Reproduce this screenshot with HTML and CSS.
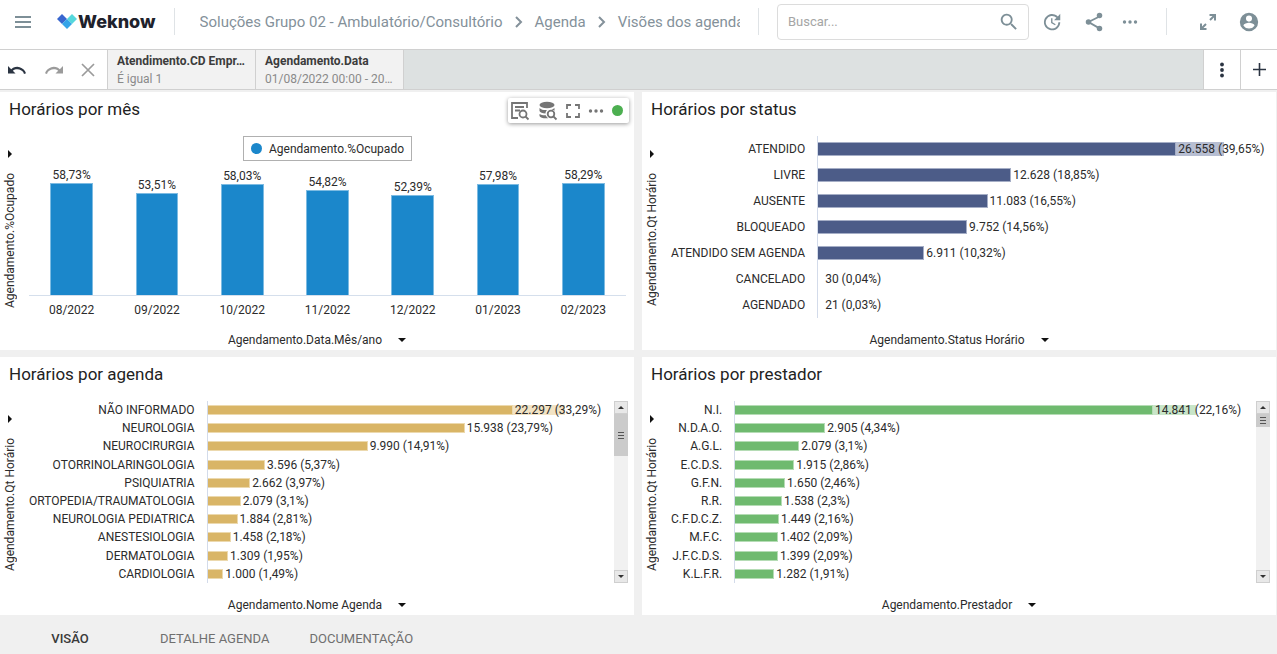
FILE: index.html
```html
<!DOCTYPE html>
<html lang="pt-BR">
<head>
<meta charset="utf-8">
<meta name="viewport" content="width=device-width, initial-scale=1">
<title>Weknow - Visões dos agendamentos</title>
<link rel="stylesheet" href="styles.css">
</head>
<body>
<header class="topbar">
  <button class="icon-btn menu" aria-label="Menu"><svg width="18" height="14" viewBox="0 0 18 14"><path d="M1 2h16M1 7h16M1 12h16" stroke="currentColor" stroke-width="1.800"/></svg></button>
  <a class="logo" href="#">
    <svg width="20" height="16" viewBox="0 0 20 16"><path d="M5 0l5 5-5 5-5-5z" fill="#3866cf"/><path d="M15 0l5 5-5 5-5-5z" fill="#56d8dc"/><path d="M10 5l5 5-5 5-5-5z" fill="#35a4e8"/></svg>
    <span>Weknow</span>
  </a>
  <span class="divider"></span>
  <nav class="crumbs" aria-label="Navegação">
    <a href="#">Soluções Grupo 02 - Ambulatório/Consultório</a>
    <svg width="8" height="12" viewBox="0 0 8 12"><path d="M1 1l5 5-5 5" fill="none" stroke="currentColor" stroke-width="2"/></svg>
    <a href="#">Agenda</a>
    <svg width="8" height="12" viewBox="0 0 8 12"><path d="M1 1l5 5-5 5" fill="none" stroke="currentColor" stroke-width="2"/></svg>
    <a href="#">Visões dos agendamentos</a>
  </nav>
  <span class="divider"></span>
  <form class="search" role="search">
    <input type="text" placeholder="Buscar..." aria-label="Buscar">
    <button class="icon-btn" type="button" aria-label="Pesquisar"><svg width="22" height="22" viewBox="0 0 24 24" fill="currentColor"><path d="M15.5 14h-.8l-.3-.3A6.5 6.5 0 1 0 13.7 14.4l.3.3v.8l5 5 1.500-1.500zm-6 0a4.500 4.500 0 1 1 0-9 4.500 4.500 0 0 1 0 9z"/></svg></button>
  </form>
  <div class="actions">
    <button class="icon-btn" aria-label="Atualizar"><svg width="22" height="22" viewBox="0 0 24 24" fill="currentColor"><path d="M21 10.100h-6.800l2.700-2.800a6.900 6.900 0 1 0 2.100 4.900h2a8.900 8.900 0 1 1-2.600-6.300L21 3zM12.500 8v4.300l3.500 2.100-.7 1.200L11 13V8z"/></svg></button>
    <button class="icon-btn" aria-label="Compartilhar"><svg width="22" height="22" viewBox="0 0 24 24" fill="currentColor"><path d="M18 6L6 12l12 7" fill="none" stroke="currentColor" stroke-width="2"/><circle cx="18" cy="5" r="3"/><circle cx="6" cy="12" r="3"/><circle cx="18" cy="19" r="3"/></svg></button>
    <button class="icon-btn dots" aria-label="Mais opções"><svg width="16" height="4" viewBox="0 0 16 4" fill="currentColor"><circle cx="2.500" cy="2" r="1.700"/><circle cx="8" cy="2" r="1.700"/><circle cx="13.500" cy="2" r="1.700"/></svg></button>
  </div>
  <span class="divider"></span>
  <div class="user">
    <button class="icon-btn" aria-label="Tela cheia"><svg width="18" height="18" viewBox="0 0 18 18" fill="none" stroke="currentColor" stroke-width="2"><path d="M10.500 2H16v5.500M16 2l-5 5M7.500 16H2v-5.500M2 16l5-5"/></svg></button>
    <button class="icon-btn" aria-label="Usuário"><svg width="22" height="22" viewBox="0 0 24 24" fill="currentColor"><path d="M12 2a10 10 0 1 0 0 20 10 10 0 0 0 0-20zm0 3a3.300 3.300 0 1 1 0 6.600A3.300 3.300 0 0 1 12 5zm0 14.200a7.200 7.200 0 0 1-6-3.200c0-2 4-3.100 6-3.100s6 1.100 6 3.100a7.200 7.200 0 0 1-6 3.200z"/></svg></button>
  </div>
</header>

<div class="filterbar">
  <div class="history">
    <button class="icon-btn undo" aria-label="Desfazer"><svg width="20" height="10" viewBox="0 0 20 10"><path d="M1 1v7.500h7.500L5.800 5.800A7 7 0 0 1 17 9l2-.7A9.100 9.100 0 0 0 4.200 4.200z" fill="currentColor"/></svg></button>
    <button class="icon-btn muted" aria-label="Refazer"><svg width="20" height="10" viewBox="0 0 20 10"><path d="M19 1v7.500h-7.500l2.700-2.700A7 7 0 0 0 3 9l-2-.7A9.100 9.100 0 0 1 15.800 4.200z" fill="currentColor"/></svg></button>
    <button class="icon-btn muted" aria-label="Limpar"><svg width="14" height="14" viewBox="0 0 14 14"><path d="M1 1l12 12M13 1L1 13" stroke="currentColor" stroke-width="1.700"/></svg></button>
  </div>
  <button class="chip"><strong>Atendimento.CD Empr…</strong><span>É igual 1</span></button>
  <button class="chip"><strong>Agendamento.Data</strong><span>01/08/2022 00:00 - 20…</span></button>
  <div class="spacer"></div>
  <button class="square" aria-label="Opções de filtro"><svg width="6" height="16" viewBox="0 0 6 16" fill="currentColor"><circle cx="3" cy="2.500" r="1.900"/><circle cx="3" cy="8" r="1.900"/><circle cx="3" cy="13.500" r="1.900"/></svg></button>
  <button class="square" aria-label="Adicionar filtro"><svg width="13" height="13" viewBox="0 0 13 13"><path d="M6.500 0v13M0 6.500h13" stroke="currentColor" stroke-width="1.600"/></svg></button>
</div>

<main class="board">
  <section class="panel">
    <h2>Horários por mês</h2>
    <div class="tools">
      <button class="icon-btn" aria-label="Ver dados"><svg width="20" height="20" viewBox="0 0 20 20" fill="none" stroke="currentColor" stroke-width="1.800"><path d="M8 17H2V2h15v5M5 6h9M5 9.500h5"/><circle cx="13" cy="13" r="3.500"/><path d="M15.500 15.500l3 3"/></svg></button>
      <button class="icon-btn" aria-label="Consultar base"><svg width="20" height="20" viewBox="0 0 20 20"><ellipse cx="9" cy="4" rx="7.500" ry="3.200" fill="currentColor"/><path d="M1.500 7c2 2 5 2.300 7.500 2-1 1-1.500 2.200-1.500 3.500-3-.1-5.500-1-6-2.500zM1.500 13c1.500 1 4 1.500 6.300 1.300.5 1.200 1.300 2.200 2.400 2.900-4 .6-8-.5-8.700-2.200zM16.500 7c-1 .8-2 1.200-3 1.400 1.300.2 2.300.7 3 1.400z" fill="currentColor"/><g fill="none" stroke="currentColor" stroke-width="1.800"><circle cx="13" cy="13" r="3.300"/><path d="M15.500 15.500l3 3"/></g></svg></button>
      <button class="icon-btn" aria-label="Expandir"><svg width="14" height="14" viewBox="0 0 14 14" fill="none" stroke="currentColor" stroke-width="1.800"><path d="M1 5V1h4M9 1h4v4M13 9v4H9M5 13H1V9"/></svg></button>
      <button class="icon-btn" aria-label="Mais"><svg width="16" height="4" viewBox="0 0 16 4" fill="currentColor"><circle cx="2.500" cy="2" r="1.700"/><circle cx="8" cy="2" r="1.700"/><circle cx="13.500" cy="2" r="1.700"/></svg></button>
      <span class="online"></span>
    </div>
    <div class="body">
      <button class="yaxis"><span>Agendamento.%Ocupado</span></button>
      <div class="colchart">
        <div class="legend"><i></i>Agendamento.%Ocupado</div>
        <div class="cols">
          <div class="col"><span>58,73%</span><i style="height:83.900%"></i></div>
          <div class="col"><span>53,51%</span><i style="height:76.400%"></i></div>
          <div class="col"><span>58,03%</span><i style="height:82.900%"></i></div>
          <div class="col"><span>54,82%</span><i style="height:78.300%"></i></div>
          <div class="col"><span>52,39%</span><i style="height:74.800%"></i></div>
          <div class="col"><span>57,98%</span><i style="height:82.800%"></i></div>
          <div class="col"><span>58,29%</span><i style="height:83.300%"></i></div>
        </div>
        <div class="months"><span>08/2022</span><span>09/2022</span><span>10/2022</span><span>11/2022</span><span>12/2022</span><span>01/2023</span><span>02/2023</span></div>
      </div>
    </div>
    <button class="xaxis">Agendamento.Data.Mês/ano</button>
  </section>

  <section class="panel">
    <h2>Horários por status</h2>
    <div class="body">
      <button class="yaxis"><span>Agendamento.Qt Horário</span></button>
      <dl class="bars navy">
        <dt>ATENDIDO</dt><dd class="top"><i style="width:80.3%"></i><span>26.558 (39,65%)</span></dd>
        <dt>LIVRE</dt><dd><i style="width:43.3%"></i><span>12.628 (18,85%)</span></dd>
        <dt>AUSENTE</dt><dd><i style="width:38%"></i><span>11.083 (16,55%)</span></dd>
        <dt>BLOQUEADO</dt><dd><i style="width:33.4%"></i><span>9.752 (14,56%)</span></dd>
        <dt>ATENDIDO SEM AGENDA</dt><dd><i style="width:23.8%"></i><span>6.911 (10,32%)</span></dd>
        <dt>CANCELADO</dt><dd class="none"><span>30 (0,04%)</span></dd>
        <dt>AGENDADO</dt><dd class="none"><span>21 (0,03%)</span></dd>
      </dl>
    </div>
    <button class="xaxis">Agendamento.Status Horário</button>
  </section>

  <section class="panel">
    <h2>Horários por agenda</h2>
    <div class="body">
      <button class="yaxis"><span>Agendamento.Qt Horário</span></button>
      <dl class="bars gold">
        <dt>NÃO INFORMADO</dt><dd class="top"><i style="width:77.4%"></i><span>22.297 (33,29%)</span></dd>
        <dt>NEUROLOGIA</dt><dd><i style="width:65.2%"></i><span>15.938 (23,79%)</span></dd>
        <dt>NEUROCIRURGIA</dt><dd><i style="width:40.6%"></i><span>9.990 (14,91%)</span></dd>
        <dt>OTORRINOLARINGOLOGIA</dt><dd><i style="width:14.6%"></i><span>3.596 (5,37%)</span></dd>
        <dt>PSIQUIATRIA</dt><dd><i style="width:10.8%"></i><span>2.662 (3,97%)</span></dd>
        <dt>ORTOPEDIA/TRAUMATOLOGIA</dt><dd><i style="width:8.4%"></i><span>2.079 (3,1%)</span></dd>
        <dt>NEUROLOGIA PEDIATRICA</dt><dd><i style="width:7.6%"></i><span>1.884 (2,81%)</span></dd>
        <dt>ANESTESIOLOGIA</dt><dd><i style="width:5.9%"></i><span>1.458 (2,18%)</span></dd>
        <dt>DERMATOLOGIA</dt><dd><i style="width:5.2%"></i><span>1.309 (1,95%)</span></dd>
        <dt>CARDIOLOGIA</dt><dd><i style="width:4%"></i><span>1.000 (1,49%)</span></dd>
      </dl>
      <div class="scroll"><button class="up" aria-label="Subir"></button><div class="thumb"></div><button class="down" aria-label="Descer"></button></div>
    </div>
    <button class="xaxis">Agendamento.Nome Agenda</button>
  </section>

  <section class="panel">
    <h2>Horários por prestador</h2>
    <div class="body">
      <button class="yaxis"><span>Agendamento.Qt Horário</span></button>
      <dl class="bars green">
        <dt>N.I.</dt><dd class="top"><i style="width:82.1%"></i><span>14.841 (22,16%)</span></dd>
        <dt>N.D.A.O.</dt><dd><i style="width:17.7%"></i><span>2.905 (4,34%)</span></dd>
        <dt>A.G.L.</dt><dd><i style="width:12.6%"></i><span>2.079 (3,1%)</span></dd>
        <dt>E.C.D.S.</dt><dd><i style="width:11.6%"></i><span>1.915 (2,86%)</span></dd>
        <dt>G.F.N.</dt><dd><i style="width:9.8%"></i><span>1.650 (2,46%)</span></dd>
        <dt>R.R.</dt><dd><i style="width:9.2%"></i><span>1.538 (2,3%)</span></dd>
        <dt>C.F.D.C.Z.</dt><dd><i style="width:8.6%"></i><span>1.449 (2,16%)</span></dd>
        <dt>M.F.C.</dt><dd><i style="width:8.4%"></i><span>1.402 (2,09%)</span></dd>
        <dt>J.F.C.D.S.</dt><dd><i style="width:8.4%"></i><span>1.399 (2,09%)</span></dd>
        <dt>K.L.F.R.</dt><dd><i style="width:7.7%"></i><span>1.282 (1,91%)</span></dd>
      </dl>
      <div class="scroll short"><button class="up" aria-label="Subir"></button><div class="thumb"></div><button class="down" aria-label="Descer"></button></div>
    </div>
    <button class="xaxis">Agendamento.Prestador</button>
  </section>
</main>

<nav class="tabs" aria-label="Visões">
  <a class="active" href="#">VISÃO</a>
  <a href="#">DETALHE AGENDA</a>
  <a href="#">DOCUMENTAÇÃO</a>
</nav>
</body>
</html>
```

FILE: styles.css
```css
* { box-sizing: border-box; }

body {
  margin: 0;
  min-height: 100vh;
  display: flex;
  flex-direction: column;
  background: #f0f0f0;
  color: #2b2b2b;
  font: 12px/16px Roboto, "Liberation Sans", sans-serif;
}

a { color: inherit; text-decoration: none; }

button {
  border: 0;
  padding: 0;
  background: none;
  color: inherit;
  font: inherit;
  cursor: pointer;
}

svg { display: block; flex: none; }

.icon-btn { display: flex; align-items: center; justify-content: center; flex: none; }

/* Top bar */
.topbar {
  display: flex;
  align-items: center;
  height: 50px;
  padding: 0 17px 6px 14px;
  border-bottom: 1px solid #d0d0d0;
  background: #fff;
  color: #7d8f97;
}

.menu { margin-right: 25px; }

.logo {
  display: flex;
  align-items: center;
  gap: 1px;
  color: #1e222c;
  font: 800 18px/24px Inter, Roboto, sans-serif;
}

.divider { flex: none; width: 1px; height: 27px; margin: 0 18px; background: #dfe3e6; }
.logo + .divider { margin-right: 25px; }

.crumbs {
  flex: 1;
  min-width: 0;
  display: flex;
  align-items: center;
  gap: 12px;
  overflow: hidden;
  color: #84919a;
  font-size: 15px;
  line-height: 20px;
  white-space: nowrap;
}

.crumbs a { flex: none; }

.search {
  flex: none;
  display: flex;
  align-items: center;
  width: 252px;
  height: 36px;
  padding: 0 8px 0 10px;
  border: 1px solid #dcdcdc;
  border-radius: 4px;
}

.search input {
  flex: 1;
  min-width: 0;
  border: 0;
  padding: 0;
  outline: 0;
  background: none;
  color: #555;
  font: 13px/20px Roboto, sans-serif;
}

.search input::placeholder { color: #a5a5a5; }

.actions { display: flex; align-items: center; gap: 20px; padding-left: 12px; }
.dots { margin-right: 10px; margin-left: -3px; }
.user { display: flex; align-items: center; gap: 21px; padding-left: 14px; }

/* Filter bar */
.filterbar {
  display: flex;
  height: 40px;
  border-bottom: 1px solid #d0d0d0;
  background: #fff;
  color: #2b3442;
}

.history { display: flex; align-items: center; gap: 17px; padding: 0 12px 0 7px; }
.muted { color: #9b9b9b; }

.chip {
  width: 148px;
  padding: 0 9px;
  border-left: 1px solid #d0d0d0;
  background: #f2f2f2;
  overflow: hidden;
  color: #8a8a8a;
  line-height: 18px;
  text-align: left;
  white-space: nowrap;
}

.chip strong, .chip span { display: block; }
.chip strong { color: #3c3c3c; font-weight: 700; }

.spacer { flex: 1; border-left: 1px solid #d0d0d0; background: #dde1e1; }

.square {
  display: flex;
  align-items: center;
  justify-content: center;
  width: 37px;
  border-left: 1px solid #d0d0d0;
}

/* Dashboard */
.board {
  flex: 1;
  display: grid;
  grid-template-columns: 1fr 1fr;
  grid-auto-rows: 1fr;
  gap: 7px 8px;
  padding: 2px 1px 0 0;
}

.panel {
  position: relative;
  display: flex;
  flex-direction: column;
  min-width: 0;
  background: #fff;
}

.panel h2 {
  margin: 0;
  padding: 5px 9px 15px;
  color: #222;
  font-size: 17px;
  font-weight: 400;
  line-height: 24px;
}

.tools {
  position: absolute;
  top: 6px;
  right: 5px;
  display: flex;
  align-items: center;
  gap: 8px;
  height: 25px;
  padding: 0 6px 0 2px;
  border-radius: 2px;
  background: #fff;
  box-shadow: 0 1px 4px #00000066;
  color: #757575;
}

.online { width: 11px; height: 11px; border-radius: 50%; background: #4caf50; }

.body { flex: 1; display: flex; min-height: 0; padding-bottom: 12px; }

.yaxis {
  flex: none;
  display: flex;
  flex-direction: column;
  align-items: center;
  gap: 15px;
  width: 29px;
  padding: 14px 10px 0 0;
}

.yaxis::before {
  content: "";
  border: 4px solid transparent;
  border-left: 4px solid #111;
  border-right: 0;
}

.yaxis span { writing-mode: vertical-rl; transform: rotate(180deg); white-space: nowrap; }

.xaxis {
  display: flex;
  align-items: center;
  justify-content: center;
  gap: 16px;
  height: 20px;
}

.xaxis::after {
  content: "";
  border: 4px solid transparent;
  border-top-color: #111;
  border-bottom: 0;
}

/* Column chart */
.colchart { flex: 1; display: flex; flex-direction: column; padding-right: 8px; }

.legend {
  align-self: center;
  display: flex;
  align-items: center;
  gap: 7px;
  height: 25px;
  padding: 0 7px;
  border: 1px solid #b0b0b0;
}

.legend i { width: 11px; height: 11px; border-radius: 50%; background: #1b87cb; }

.cols { flex: 1; display: flex; border-bottom: 1px solid #d5dfec; }

.col {
  flex: 1;
  display: flex;
  flex-direction: column;
  align-items: center;
  justify-content: flex-end;
}

.col i { flex: none; width: 50%; border: 1px solid #7dbbe2; border-bottom: 0; background: #1b87cb; }

.months { display: flex; padding-top: 6px; line-height: 16px; }
.months span { flex: 1; text-align: center; }

/* Horizontal bars */
.bars {
  flex: 1;
  display: grid;
  grid-template-columns: auto 1fr;
  grid-auto-rows: 1fr;
  margin: 0 12px 0 0;
  white-space: nowrap;
}

.bars dt { display: flex; align-items: center; justify-content: flex-end; padding-right: 12px; }

.bars dd {
  display: flex;
  align-items: center;
  gap: 2px;
  margin: 0;
  border-left: 1px solid #d3dbea;
}

.bars i { flex: none; height: 10px; background: var(--bar); border: 1px solid var(--edge); border-left: 0; }
.bars span { position: relative; z-index: 0; }
.bars .none { padding-left: 7px; }

.bars .top span::before {
  content: "";
  position: absolute;
  z-index: -1;
  top: 50%;
  left: -2px;
  width: 56%;
  height: 10px;
  margin-top: -5px;
  background: var(--fade);
}

.navy { --bar: #4c5c88; --edge: #a5aec6; --fade: #b7bed2; }
.navy i { height: 14px; }
.navy .top span::before { height: 14px; margin-top: -7px; }
.gold { --bar: #d9b566; --edge: #ecd9ae; --fade: #f2e3c4; }
.green { --bar: #6fba6f; --edge: #b5dcb5; --fade: #c8e5c8; }
.gold .top span::before { width: 60%; }
.green .top span::before { width: 50%; }

/* Chart scrollbar */
.scroll {
  flex: none;
  display: flex;
  flex-direction: column;
  width: 14px;
  margin-right: 6px;
  background: #f1f1f1;
}

.scroll button {
  display: flex;
  align-items: center;
  justify-content: center;
  height: 13px;
  border: 1px solid #cfcfcf;
  background: #e8e8e8;
}

.scroll button::before { content: ""; border: 3px solid transparent; }
.scroll .up::before { border-bottom-color: #333; border-top: 0; }
.scroll .down::before { border-top-color: #333; border-bottom: 0; }
.scroll .down { margin-top: auto; }

.thumb {
  display: flex;
  align-items: center;
  justify-content: center;
  height: 42px;
  background: #cbcbcb;
}

.thumb::before {
  content: "";
  width: 6px;
  height: 7px;
  background: repeating-linear-gradient(#555 0 1px, transparent 1px 3px);
}

.short .thumb { height: 13px; }

/* Page tabs */
.tabs { display: flex; height: 39px; background: #f0f0f0; }

.tabs a {
  min-width: 140px;
  padding: 16px 20px 0;
  color: #6f6f6f;
  font-size: 13px;
  font-weight: 400;
  text-align: center;
}

.tabs .active { color: #3a3a3a; font-weight: 500; }
```
